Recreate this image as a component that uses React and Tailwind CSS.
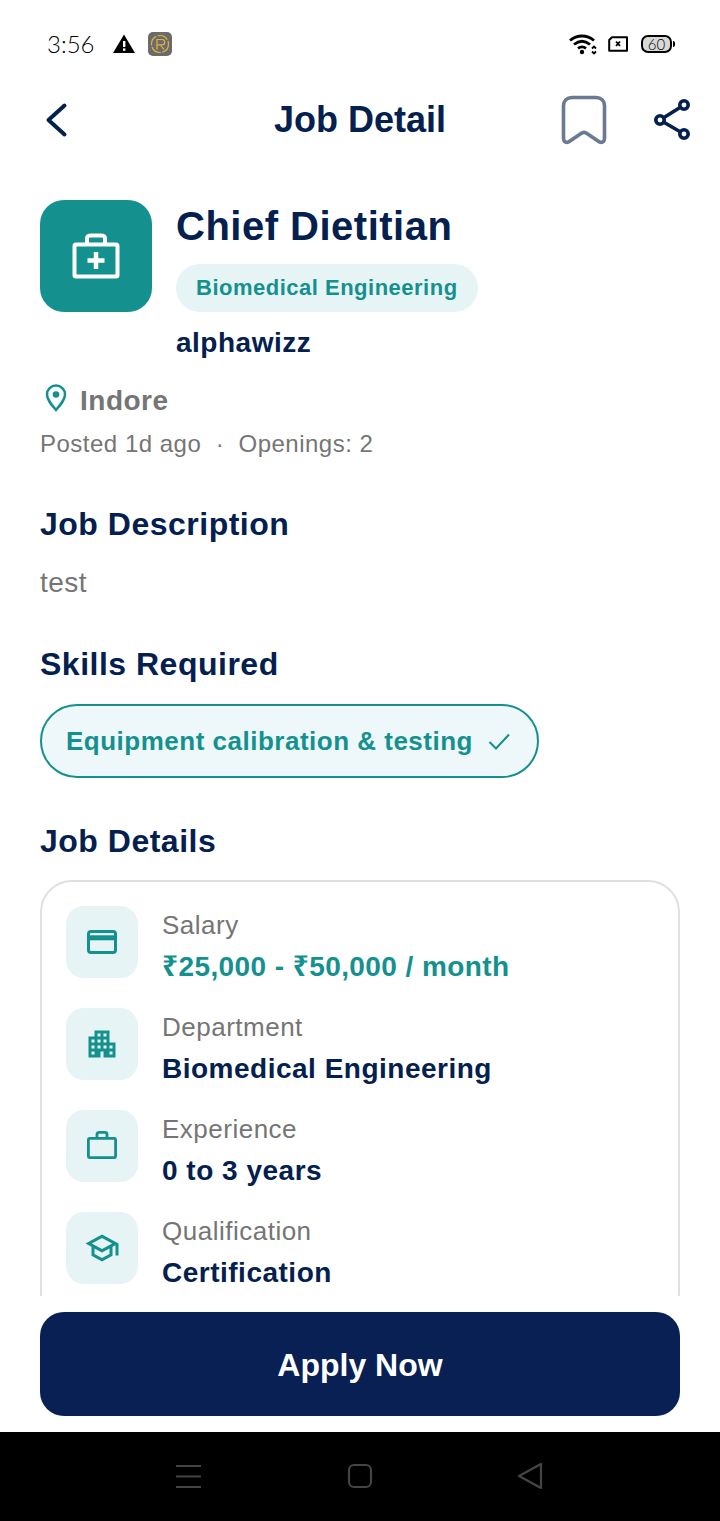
import { MdApartment, MdOutlineSchool } from 'react-icons/md'

const navy = 'text-[#04204f]'

const StatusBar = () => (
  <div className="h-[88px] shrink-0 flex items-center justify-between pl-[47px] pr-[46px]">
    <div className="flex items-center">
      <span className="font-['Lato',sans-serif] font-light text-[24px] text-black leading-none w-[66px]">3:56</span>
      <svg width="22" height="20" viewBox="0 0 22 20">
        <path d="M11 0.5 L22 19 H0 Z" fill="#000" />
        <rect x="10" y="7" width="2.4" height="6" fill="#fff" />
        <rect x="10" y="14.4" width="2.4" height="2.4" fill="#fff" />
      </svg>
      <div className="ml-[13px] w-6 h-6 rounded-[5px] bg-[#6b6b6b] flex items-center justify-center">
        <svg width="22" height="22" viewBox="0 0 22 22" fill="none" stroke="#e0b53c" strokeWidth="1.2">
          <circle cx="11" cy="11" r="8.500" strokeDasharray="11 1.500" />
          <path d="M8 16.500V6.500h5a2.700 2.700 0 0 1 0 5.400H8M11.500 12l3.500 4.500" />
        </svg>
      </div>
    </div>
    <div className="flex items-center">
      <svg width="28" height="22" viewBox="0 0 28 22" fill="none" stroke="#000" strokeWidth="2.800">
        <path d="M1 7.500C8 1.500 18 1.500 25 7.500" />
        <path d="M5 11.500C10 7.500 16 7.500 21 11.500" />
        <path d="M9 15.300C11.500 13.500 14.500 13.500 17 15.300" />
        <circle cx="13" cy="19" r="2.200" fill="#000" stroke="none" />
        <path d="M23 15.500l2-2 2 2M23 18.500l2 2 2-2" strokeWidth="1.800" />
      </svg>
      <svg width="20" height="16" viewBox="0 0 20 16" fill="none" className="ml-[11px]">
        <path d="M4 1.200H19V14.800H1.200V4Z" stroke="#000" strokeWidth="2" strokeLinejoin="round" />
        <path d="M8 5.500l4 4.500M12 5.500l-4 4.500" stroke="#000" strokeWidth="1.800" />
      </svg>
      <div className="ml-[13px] mr-[2px] relative w-[31px] h-[18px] border-2 border-black rounded-[7px] bg-[#d8d8d8] flex items-center justify-center">
        <span className="font-['Lato',sans-serif] font-light text-[15px] leading-none text-black">60</span>
        <div className="absolute -right-[5px] top-[4px] w-[2px] h-[6px] bg-black rounded-r" />
      </div>
    </div>
  </div>
)

const Header = () => (
  <div className="h-[64px] shrink-0 relative flex items-center justify-center">
    <svg width="24" height="36" viewBox="0 0 24 36" fill="none" className="absolute left-[45px] top-[14px]">
      <path d="M19.500 3.500 L3.500 18 L19.500 32.500" stroke="#04204f" strokeWidth="4" strokeLinecap="round" strokeLinejoin="round" />
    </svg>
    <h1 className={`text-[36px] leading-none font-bold ${navy}`}>Job Detail</h1>
    <svg width="46" height="50" viewBox="0 0 46 50" fill="none" className="absolute left-[561px] top-[7px]">
      <path d="M11 2.500H35C40 2.500 43.500 6 43.500 11V43C43.500 47.500 40 48.500 37 46L26 38.500C24 37 22 37 20 38.500L9 46C6 48.500 2.500 47.500 2.500 43V11C2.500 6 6 2.500 11 2.500Z" stroke="#6b7a93" strokeWidth="3.600" />
    </svg>
    <svg width="40" height="42" viewBox="0 0 40 42" fill="none" className="absolute left-[652px] top-[11px]">
      <path d="M8 21 L32 6 M8 21 L32 35" stroke="#04204f" strokeWidth="3.600" />
      <circle cx="32" cy="6" r="4.200" fill="#fff" stroke="#04204f" strokeWidth="3.600" />
      <circle cx="8" cy="21" r="4.200" fill="#fff" stroke="#04204f" strokeWidth="3.600" />
      <circle cx="32" cy="35" r="4.200" fill="#fff" stroke="#04204f" strokeWidth="3.600" />
    </svg>
  </div>
)

const CardIcon = () => (
  <svg width="30" height="24" viewBox="0 0 30 24" fill="none" stroke="#14918f" strokeWidth="3">
    <rect x="1.500" y="1.500" width="27" height="21" rx="2.500" />
    <path d="M1.500 7.800H28.500" strokeWidth="5" />
  </svg>
)

const CaseIcon = () => (
  <svg width="30" height="28" viewBox="0 0 30 28" fill="none" stroke="#14918f" strokeWidth="2.800" strokeLinejoin="round" className="-mt-[2px]">
    <rect x="1.400" y="7.400" width="27.200" height="19.200" rx="1.500" />
    <path d="M10 7V3.200C10 2 11 1.400 12 1.400H18C19 1.400 20 2 20 3.200V7" />
  </svg>
)

const details = [
  { icon: <CardIcon />, label: 'Salary', value: '₹25,000 - ₹50,000 / month', color: 'text-[#14918f] tracking-[0.42px]' },
  { icon: <MdApartment size={36} color="#14918f" />, label: 'Department', value: 'Biomedical Engineering', color: `${navy} tracking-[0.5px]` },
  { icon: <CaseIcon />, label: 'Experience', value: '0 to 3 years', color: `${navy} tracking-[0.5px]` },
  { icon: <MdOutlineSchool size={36} color="#14918f" />, label: 'Qualification', value: 'Certification', color: `${navy} tracking-[0.5px]` },
]

const DetailRow = ({ item }) => (
  <div className="flex h-[72px] mb-[30px]">
    <div className="w-[72px] h-[72px] shrink-0 rounded-[18px] bg-[#e6f4f5] flex items-center justify-center">{item.icon}</div>
    <div className="ml-6 pt-[2px]">
      <p className="text-[26px] leading-[34px] tracking-[0.5px] text-[#757575]">{item.label}</p>
      <p className={`text-[28px] leading-[36px] mt-[7px] font-bold ${item.color}`}>{item.value}</p>
    </div>
  </div>
)

const SectionTitle = ({ children }) => (
  <h2 className={`text-[32px] leading-[40px] font-bold tracking-[0.5px] ${navy}`}>{children}</h2>
)

export default function App() {
  return (
    <div className="w-[720px] h-[1521px] bg-white flex flex-col font-['Liberation_Sans','Noto_Sans',sans-serif]">
      <StatusBar />
      <Header />
      <div className="flex-1 overflow-hidden px-10 pt-12">
        <div className="flex gap-6">
          <div className="w-[112px] h-[112px] shrink-0 rounded-[24px] bg-[#14918f] flex items-center justify-center">
            <svg width="48" height="48" viewBox="0 0 48 48" fill="none" stroke="#fff" strokeWidth="4" strokeLinejoin="round">
              <rect x="2.500" y="12.500" width="43" height="32" rx="1.500" />
              <path d="M15 12V6.500C15 5 16 3.500 18 3.500H30C32 3.500 33 5 33 6.500V12" />
              <path d="M24 20V37M15.500 28.500H32.500" strokeWidth="4.500" />
            </svg>
          </div>
          <div>
            <h2 className={`text-[40px] leading-[52px] font-bold tracking-[0.5px] ${navy}`}>Chief Dietitian</h2>
            <span className="inline-block mt-3 h-12 px-5 rounded-full bg-[#e6f4f5] text-[22px] leading-[48px] font-bold tracking-[0.5px] text-[#14918f]">Biomedical Engineering</span>
            <p className={`mt-[13px] text-[28px] leading-[36px] font-bold tracking-[0.5px] ${navy}`}>alphawizz</p>
          </div>
        </div>
        <div className="flex items-center mt-[22px] h-9">
          <svg width="22" height="28" viewBox="0 0 22 28" fill="none" stroke="#14918f" strokeWidth="2.500" className="ml-[5px] -mt-[6px]">
            <path d="M11 26C6 20 2 15.500 2 10.500C2 5.500 6 1.500 11 1.500C16 1.500 20 5.500 20 10.500C20 15.500 16 20 11 26Z" />
            <circle cx="11" cy="10.500" r="3.300" fill="#14918f" stroke="none" />
          </svg>
          <span className="ml-[13px] text-[28px] leading-9 font-bold tracking-[0.5px] text-[#757575]">Indore</span>
        </div>
        <p className="mt-[9px] text-[24px] leading-8 tracking-[0.5px] text-[#757575] whitespace-pre">Posted 1d ago  ·  Openings: 2</p>
        <div className="mt-[44px]"><SectionTitle>Job Description</SectionTitle></div>
        <p className="mt-[21px] text-[28px] leading-9 tracking-[0.5px] text-[#757575]">test</p>
        <div className="mt-[43px]"><SectionTitle>Skills Required</SectionTitle></div>
        <div className="mt-[20px] inline-flex items-center h-[74px] pl-6 pr-[26px] rounded-full border-2 border-[#14918f] bg-[#eef8fa]">
          <span className="text-[26px] font-bold tracking-[0.5px] text-[#14918f]">Equipment calibration &amp; testing</span>
          <svg width="24" height="24" viewBox="0 0 24 24" fill="none" stroke="#14918f" strokeWidth="2" className="ml-[14px]">
            <path d="M2.500 13L9 19.500L22 5.500" />
          </svg>
        </div>
        <div className="mt-[43px]"><SectionTitle>Job Details</SectionTitle></div>
        <div className="mt-[19px] rounded-[32px] border-2 border-[#e0e0e0] px-6 pt-6 pb-2">
          {details.map((item) => <DetailRow key={item.label} item={item} />)}
        </div>
      </div>
      <div className="h-[136px] shrink-0 bg-white px-10 pt-4">
        <button className="w-full h-[104px] rounded-[24px] bg-[#082053] text-white text-[32px] font-bold pt-[1px]">Apply Now</button>
      </div>
      <div className="h-[89px] shrink-0 bg-black flex items-start">
        <div className="flex items-center pt-[30px] pl-[176px]">
          <svg width="26" height="26" viewBox="0 0 26 26" stroke="#444" strokeWidth="2.200">
            <path d="M0 3H25M0 13.500H25M0 24H25" />
          </svg>
          <svg width="26" height="26" viewBox="0 0 26 26" fill="none" stroke="#444" strokeWidth="2.200" className="ml-[145px]">
            <rect x="2" y="2" width="22" height="22" rx="5" />
          </svg>
          <svg width="28" height="28" viewBox="0 0 28 28" fill="none" stroke="#444" strokeWidth="2.200" strokeLinejoin="round" className="ml-[144px]">
            <path d="M2 14L24 2V26Z" />
          </svg>
        </div>
      </div>
    </div>
  )
}
